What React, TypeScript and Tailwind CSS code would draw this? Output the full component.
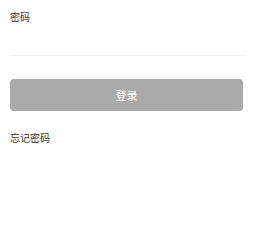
export default function App() {
  return (
    <div className="w-[254px] h-[225px] bg-white px-[10px]" style={{ fontFamily: '"Noto Sans CJK SC", "Noto Sans", sans-serif' }}>
      <div className="pt-[10px] text-[10px] leading-[14px] text-[#333]">密码</div>
      <div className="mt-[31px] h-px w-[236px] bg-[#eeeeee]" />
      <button className="mt-[23px] flex h-[32px] w-[233px] items-center justify-center rounded-[4px] bg-[#aaaaaa] text-[11px] text-white">
        登录
      </button>
      <div className="mt-[20px] text-[10px] leading-[14px] text-[#333]">忘记密码</div>
    </div>
  );
}
